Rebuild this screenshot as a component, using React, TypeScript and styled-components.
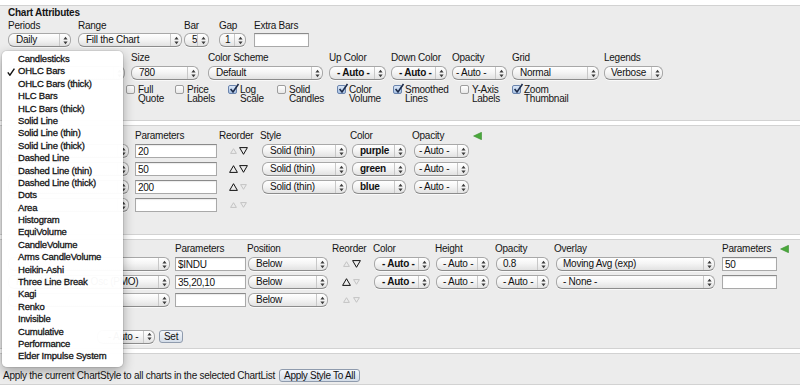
import React from "react";
import styled, { createGlobalStyle } from "styled-components";

const GlobalStyle = createGlobalStyle`
  html, body {
    margin: 0;
    padding: 0;
    background: #ffffff;
  }
  body {
    font-family: "Liberation Sans", Arial, Helvetica, sans-serif;
    font-size: 10px;
    letter-spacing: -0.25px;
    color: #151515;
  }
  * {
    box-sizing: border-box;
  }
`;

const Page = styled.div`
  position: relative;
  width: 800px;
  height: 386px;
  padding-top: 5px;
  overflow: hidden;
`;

const Panel = styled.section<{ $pt: number; $pb: number; $pl?: number }>`
  background: #ececec;
  border-top: 1px solid #d2d2d2;
  border-bottom: 1px solid #d2d2d2;
  padding: ${({ $pt }) => $pt}px 0 ${({ $pb }) => $pb}px ${({ $pl = 8 }) => $pl}px;

  & + & {
    margin-top: 4px;
  }
`;

const Title = styled.div`
  font-weight: bold;
  line-height: 12px;
  height: 12px;
  margin-bottom: 1px;
`;

const FieldRow = styled.div<{ $mt?: number }>`
  display: flex;
  margin-top: ${({ $mt = 0 }) => $mt}px;
`;

const Field = styled.div<{ $w?: number; $gap: number }>`
  display: flex;
  flex-direction: column;
  align-items: flex-start;
  gap: ${({ $gap }) => $gap}px;
  width: ${({ $w }) => ($w ? `${$w}px` : "auto")};
  flex: none;
`;

const Label = styled.span`
  line-height: 12px;
  height: 12px;
  white-space: nowrap;
`;

const SelectBox = styled.div<{ $w: number; $bold?: boolean; $ml?: number }>`
  display: flex;
  align-items: stretch;
  width: ${({ $w }) => $w}px;
  height: 14px;
  margin-left: ${({ $ml = 0 }) => $ml}px;
  border: 1px solid #a8a8a8;
  border-bottom-color: #8c8c8c;
  border-radius: 6px;
  background: linear-gradient(#ffffff, #f5f5f5 45%, #e2e2e2);
  box-shadow: 0 1px 0 rgba(255, 255, 255, 0.7);
  font-weight: ${({ $bold }) => ($bold ? "bold" : "normal")};
  color: #111;
  flex: none;
`;

const SelectValue = styled.span<{ $pad: number }>`
  flex: 1;
  min-width: 0;
  overflow: hidden;
  white-space: nowrap;
  line-height: 12px;
  padding-left: ${({ $pad }) => $pad}px;
`;

const SelectButton = styled.span`
  flex: none;
  width: 11px;
  border-left: 1px solid #c8c8c8;
  display: flex;
  align-items: center;
  justify-content: center;
`;

const TextInput = styled.input<{ $w: number }>`
  width: ${({ $w }) => $w}px;
  height: 14px;
  margin: 0;
  padding: 0 2px;
  font: inherit;
  letter-spacing: inherit;
  color: #111;
  background: #fff;
  border: 1px solid #a9a9a9;
  border-top-color: #8a8a8a;
  box-shadow: inset 0 1px 1px rgba(0, 0, 0, 0.08);
  outline: none;
  border-radius: 0;
`;

const CheckRow = styled.div`
  display: flex;
  margin-top: 5px;
  padding-left: 118px;
`;

const CheckItem = styled.label<{ $w?: number }>`
  display: flex;
  align-items: flex-start;
  gap: 3px;
  width: ${({ $w }) => ($w ? `${$w}px` : "auto")};
  flex: none;
`;

const Box = styled.span<{ $on?: boolean }>`
  position: relative;
  flex: none;
  width: 9px;
  height: 9px;
  border: 1px solid ${({ $on }) => ($on ? "#6a84ad" : "#9d9d9d")};
  border-radius: 2px;
  background: ${({ $on }) =>
    $on ? "linear-gradient(#dbe7f7, #a7c1e4)" : "linear-gradient(#ffffff, #e8e8e8)"};
`;

const Tick = styled.svg`
  position: absolute;
  left: 0px;
  top: -3px;
`;

const CheckText = styled.span`
  line-height: 9px;
  white-space: nowrap;

  & > span {
    display: block;
  }
`;

const GridRow = styled.div<{ $cols: string; $mt?: number; $h?: number }>`
  display: grid;
  grid-template-columns: ${({ $cols }) => $cols};
  align-items: center;
  height: ${({ $h = 14 }) => $h}px;
  margin-top: ${({ $mt = 0 }) => $mt}px;
`;

const Head = styled.span`
  line-height: 12px;
  white-space: nowrap;
`;

const Reorder = styled.div`
  display: flex;
  align-items: center;
  gap: 1px;
  padding-left: 10px;
`;

const ArrowSlot = styled.span`
  width: 9px;
  height: 8px;
  display: flex;
  align-items: center;
  justify-content: center;
`;

const ControlLine = styled.div<{ $mt?: number; $pl?: number }>`
  display: flex;
  align-items: center;
  gap: 4px;
  height: 15px;
  margin-top: ${({ $mt = 0 }) => $mt}px;
  padding-left: ${({ $pl = 0 }) => $pl}px;
`;

const Button = styled.button`
  height: 13px;
  margin: 0;
  padding: 0 4px;
  font: inherit;
  letter-spacing: -0.3px;
  line-height: 11px;
  color: #111;
  border: 1px solid #8f9bad;
  border-radius: 3px;
  background: linear-gradient(#f4f7fb, #d3dce8);
  white-space: nowrap;
`;

const Menu = styled.ul`
  position: absolute;
  left: 2px;
  top: 51px;
  width: 121px;
  height: 316px;
  margin: 0;
  padding: 2px 0 0;
  list-style: none;
  background: rgba(255, 255, 255, 0.97);
  border-radius: 5px;
  box-shadow: 0 0 0 1px rgba(0, 0, 0, 0.07), 0 4px 12px rgba(0, 0, 0, 0.32);
  font-size: 9.5px;
  letter-spacing: -0.2px;
  color: #141414;
`;

const MenuItem = styled.li`
  position: relative;
  height: 12.4px;
  line-height: 12.4px;
  padding-left: 16px;
  white-space: nowrap;
  -webkit-text-stroke: 0.3px #141414;
`;

const MenuTick = styled.svg`
  position: absolute;
  left: 5px;
  top: 3px;
`;

function Select({
  w,
  value,
  bold,
  pad = 7,
  ml,
}: {
  w: number;
  value: string;
  bold?: boolean;
  pad?: number;
  ml?: number;
}) {
  return (
    <SelectBox $w={w} $bold={bold} $ml={ml}>
      <SelectValue $pad={pad}>{value}</SelectValue>
      <SelectButton>
        <svg width="5" height="9" viewBox="0 0 5 9">
          <path d="M0.4 3.6 L2.5 0.8 L4.6 3.6 Z M0.4 5.4 L2.5 8.2 L4.6 5.4 Z" fill="#3c3c3c" />
        </svg>
      </SelectButton>
    </SelectBox>
  );
}

function Check({ on, lines, w }: { on?: boolean; lines: string[]; w?: number }) {
  return (
    <CheckItem $w={w}>
      <Box $on={on}>
        {on && (
          <Tick width="11" height="11" viewBox="0 0 11 11">
            <path d="M1.6 6 L4 9 L9.5 1" fill="none" stroke="#1c2b4a" strokeWidth="1.6" />
          </Tick>
        )}
      </Box>
      <CheckText>
        {lines.map((l) => (
          <span key={l}>{l}</span>
        ))}
      </CheckText>
    </CheckItem>
  );
}

function Arrow({ dir, on }: { dir: "up" | "down"; on: boolean }) {
  const w = on ? 9 : 7;
  const h = on ? 8 : 6;
  const d =
    dir === "up"
      ? `M${w / 2} 0.7 L${w - 0.6} ${h - 0.6} H0.6 Z`
      : `M0.6 0.6 H${w - 0.6} L${w / 2} ${h - 0.7} Z`;
  return (
    <ArrowSlot>
      <svg width={w} height={h} viewBox={`0 0 ${w} ${h}`}>
        <path d={d} fill="none" stroke={on ? "#111" : "#c3c3c3"} strokeWidth="1" />
      </svg>
    </ArrowSlot>
  );
}

function Moves({ up, down }: { up: boolean; down: boolean }) {
  return (
    <Reorder>
      <Arrow dir="up" on={up} />
      <Arrow dir="down" on={down} />
    </Reorder>
  );
}

const GreenArrow = () => (
  <svg width="9" height="8" viewBox="0 0 9 8">
    <path d="M8.5 0.3 L0.6 4 L8.5 7.7 Z" fill="#4aa83c" stroke="#3b8f2f" strokeWidth="0.6" />
  </svg>
);

const chartTypes = [
  "Candlesticks",
  "OHLC Bars",
  "OHLC Bars (thick)",
  "HLC Bars",
  "HLC Bars (thick)",
  "Solid Line",
  "Solid Line (thin)",
  "Solid Line (thick)",
  "Dashed Line",
  "Dashed Line (thin)",
  "Dashed Line (thick)",
  "Dots",
  "Area",
  "Histogram",
  "EquiVolume",
  "CandleVolume",
  "Arms CandleVolume",
  "Heikin-Ashi",
  "Three Line Break",
  "Kagi",
  "Renko",
  "Invisible",
  "Cumulative",
  "Performance",
  "Elder Impulse System",
];

// overlay rows; the first column sits under the open menu
const overlays = [
  { params: "20", up: false, down: true, color: "purple" },
  { params: "50", up: true, down: true, color: "green" },
  { params: "200", up: true, down: false, color: "blue" },
];

const overlayCols = "127px 84px 41px 90px 62px 61px 12px";
const indicatorCols = "167px 72px 85px 41px 62px 60px 59px 168px 58px 12px";

const indicators = [
  {
    name: "",
    params: "$INDU",
    up: false,
    down: true,
    opacity: "0.8",
    overlay: "Moving Avg (exp)",
    oparams: "50",
  },
  {
    name: "Price Momentum Osc (PMO)",
    params: "35,20,10",
    up: true,
    down: false,
    opacity: "- Auto -",
    overlay: "- None -",
    oparams: "",
  },
];

export default function App() {
  return (
    <Page>
      <GlobalStyle />

      <Panel $pt={1} $pb={17}>
        <Title>Chart Attributes</Title>
        <FieldRow>
          <Field $w={70} $gap={1}>
            <Label>Periods</Label>
            <Select w={63} value="Daily" />
          </Field>
          <Field $w={106} $gap={1}>
            <Label>Range</Label>
            <Select w={104} value="Fill the Chart" />
          </Field>
          <Field $w={35} $gap={1}>
            <Label>Bar</Label>
            <Select w={25} value="5" />
          </Field>
          <Field $w={35} $gap={1}>
            <Label>Gap</Label>
            <Select w={27} value="1" pad={5} />
          </Field>
          <Field $gap={1}>
            <Label>Extra Bars</Label>
            <TextInput $w={55} readOnly value="" />
          </Field>
        </FieldRow>
        <FieldRow $mt={5}>
          <Field $w={123} $gap={2}>
            <Label />
            <Select w={117} value="" />
          </Field>
          <Field $w={77} $gap={2}>
            <Label>Size</Label>
            <Select w={68} value="780" />
          </Field>
          <Field $w={121} $gap={2}>
            <Label>Color Scheme</Label>
            <Select w={115} value="Default" />
          </Field>
          <Field $w={62} $gap={2}>
            <Label>Up Color</Label>
            <Select w={57} value="- Auto -" bold />
          </Field>
          <Field $w={61} $gap={2}>
            <Label>Down Color</Label>
            <Select w={56} value="- Auto -" bold />
          </Field>
          <Field $w={60} $gap={2}>
            <Label>Opacity</Label>
            <Select w={55} value="- Auto -" pad={3} />
          </Field>
          <Field $w={92} $gap={2}>
            <Label>Grid</Label>
            <Select w={87} value="Normal" />
          </Field>
          <Field $gap={2}>
            <Label>Legends</Label>
            <Select w={59} value="Verbose" pad={6} />
          </Field>
        </FieldRow>
        <CheckRow>
          <Check w={49} lines={["Full", "Quote"]} />
          <Check w={53} lines={["Price", "Labels"]} />
          <Check w={49} on lines={["Log", "Scale"]} />
          <Check w={60} lines={["Solid", "Candles"]} />
          <Check w={56} on lines={["Color", "Volume"]} />
          <Check w={67} on lines={["Smoothed", "Lines"]} />
          <Check w={52} lines={["Y-Axis", "Labels"]} />
          <Check on lines={["Zoom", "Thumbnail"]} />
        </CheckRow>
      </Panel>

      <Panel $pt={4} $pb={22}>
        <GridRow $cols={overlayCols} $h={12}>
          <span />
          <Head>Parameters</Head>
          <Head>Reorder</Head>
          <Head>Style</Head>
          <Head>Color</Head>
          <Head>Opacity</Head>
          <GreenArrow />
        </GridRow>
        {overlays.map((o, i) => (
          <GridRow key={o.params} $cols={overlayCols} $mt={i === 0 ? 2 : 4}>
            <Select w={121} value="" />
            <TextInput $w={82} readOnly value={o.params} />
            <Moves up={o.up} down={o.down} />
            <Select w={85} value="Solid (thin)" ml={2} />
            <Select w={54} value={o.color} bold ml={2} />
            <Select w={55} value="- Auto -" pad={4} ml={2} />
          </GridRow>
        ))}
        <GridRow $cols={overlayCols} $mt={4}>
          <Select w={121} value="" />
          <TextInput $w={82} readOnly value="" />
          <Moves up={false} down={false} />
        </GridRow>
      </Panel>

      <Panel $pt={3} $pb={4}>
        <GridRow $cols={indicatorCols} $h={12}>
          <span />
          <Head>Parameters</Head>
          <Head>Position</Head>
          <Head>Reorder</Head>
          <Head>Color</Head>
          <Head>Height</Head>
          <Head>Opacity</Head>
          <Head>Overlay</Head>
          <Head>Parameters</Head>
          <GreenArrow />
        </GridRow>
        {indicators.map((ind, i) => (
          <GridRow key={ind.params} $cols={indicatorCols} $mt={i === 0 ? 2 : 4}>
            <Select w={162} value={ind.name} />
            <TextInput $w={71} readOnly value={ind.params} />
            <Select w={80} value="Below" ml={1} />
            <Moves up={ind.up} down={ind.down} />
            <Select w={56} value="- Auto -" bold ml={1} />
            <Select w={53} value="- Auto -" pad={6} ml={1} />
            <Select w={53} value={ind.opacity} pad={6} ml={1} />
            <Select w={159} value={ind.overlay} pad={6} ml={2} />
            <TextInput $w={55} readOnly value={ind.oparams} />
          </GridRow>
        ))}
        <GridRow $cols={indicatorCols} $mt={4}>
          <Select w={162} value="" />
          <TextInput $w={71} readOnly value="" />
          <Select w={80} value="Below" ml={1} />
          <Moves up={false} down={false} />
        </GridRow>
        <ControlLine $mt={22} $pl={89}>
          <Select w={58} value="- Auto -" pad={10} />
          <Button>Set</Button>
        </ControlLine>
      </Panel>

      <Panel $pt={14} $pb={1} $pl={3}>
        <ControlLine>
          <span>Apply the current ChartStyle to all charts in the selected ChartList</span>
          <Button>Apply Style To All</Button>
        </ControlLine>
      </Panel>

      <Menu>
        {chartTypes.map((t) => (
          <MenuItem key={t}>
            {t === "OHLC Bars" && (
              <MenuTick width="8" height="8" viewBox="0 0 8 8">
                <path d="M0.8 4.4 L2.9 7.2 L7.4 0.6" fill="none" stroke="#111" strokeWidth="1.4" />
              </MenuTick>
            )}
            {t}
          </MenuItem>
        ))}
      </Menu>
    </Page>
  );
}
